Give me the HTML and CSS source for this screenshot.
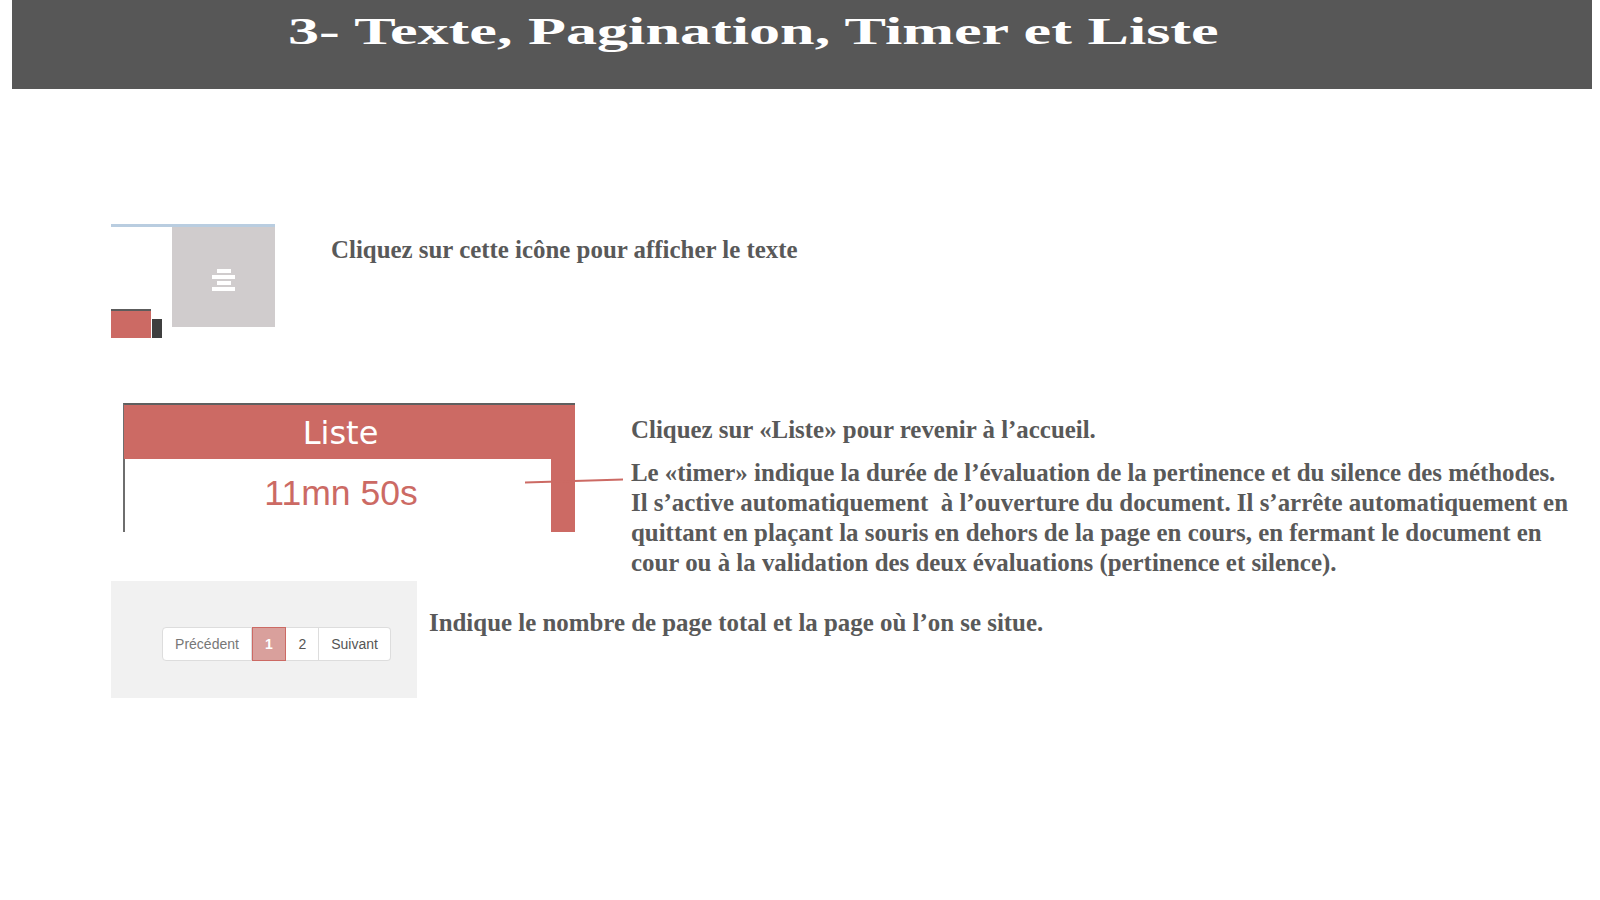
FILE: index.html
```html
<!DOCTYPE html>
<html lang="fr">

<head>
    <meta charset="UTF-8">
    <meta name="viewport" content="width=device-width, initial-scale=1.0">
    <title>3- Texte, Pagination, Timer et Liste</title>
    <link rel="stylesheet" href="styles.css">
</head>

<body>
    <header class="banner">
        <h1 class="banner-title">3- Texte, Pagination, Timer et Liste</h1>
    </header>

    <main class="content">
        <!-- icone texte -->
        <section class="row row-icon">
            <div class="icon-shot">
                <div class="icon-left">
                    <span class="icon-red"></span>
                    <span class="icon-dark"></span>
                </div>
                <div class="icon-grey">
                    <span class="bar bar-short"></span>
                    <span class="bar"></span>
                    <span class="bar bar-short"></span>
                    <span class="bar"></span>
                </div>
            </div>
            <p class="note note-icon">Cliquez sur cette icône pour afficher le texte</p>
        </section>

        <!-- liste et timer -->
        <section class="row row-list">
            <div class="list-shot">
                <div class="list-head">Liste</div>
                <div class="list-body">
                    <div class="list-timer">11mn 50s</div>
                    <div class="list-side"></div>
                </div>
                <svg class="pointer" width="98" height="6" viewBox="0 0 98 6">
                    <line x1="0" y1="4.5" x2="98" y2="1.5" stroke="#cc6a64" stroke-width="2"></line>
                </svg>
            </div>
            <div class="list-notes">
                <p class="note note-list">Cliquez sur «Liste» pour revenir à l’accueil.</p>
                <p class="note note-timer">Le «timer» indique la durée de l’évaluation de la pertinence et du silence des méthodes.<br>
                    Il s’active automatiquement &nbsp;à l’ouverture du document. Il s’arrête automatiquement en<br>
                    quittant en plaçant la souris en dehors de la page en cours, en fermant le document en<br>
                    cour ou à la validation des deux évaluations (pertinence et silence).</p>
            </div>
        </section>

        <!-- pagination -->
        <section class="row row-pages">
            <div class="pages-shot">
                <div class="pagination">
                    <a class="page page-prev">Précédent</a>
                    <a class="page page-num page-active">1</a>
                    <a class="page page-num">2</a>
                    <a class="page page-next">Suivant</a>
                </div>
            </div>
            <p class="note note-pages">Indique le nombre de page total et la page où l’on se situe.</p>
        </section>
    </main>
</body>

</html>
```

FILE: styles.css
```css
* {
    margin: 0;
    padding: 0;
    box-sizing: border-box;
}

body {
    background-color: #fff;
    font-family: "Liberation Serif", serif;
    color: #595959;
}

.banner {
    height: 89px;
    margin: 0 8px 0 12px;
    padding: 9px 0 0 276px;
    background-color: #575757;
}

.banner-title {
    display: inline-block;
    font-size: 37px;
    line-height: 46px;
    font-weight: bold;
    white-space: nowrap;
    color: #fff;
    transform: scaleX(1.68);
    transform-origin: left center;
}

.content {
    padding: 135px 0 0 111px;
}

.row {
    display: flex;
    align-items: flex-start;
}

.note {
    font-size: 24.9px;
    line-height: 30px;
    font-weight: bold;
    white-space: nowrap;
}

/* icone texte */
.row-icon {
    height: 114px;
}

.icon-shot {
    display: flex;
    width: 164px;
    height: 114px;
    border-top: 3px solid #b9cde0;
}

.icon-left {
    display: flex;
    align-items: flex-end;
    width: 61px;
    height: 111px;
}

.icon-red {
    width: 40px;
    height: 29px;
    background-color: #cc6a64;
    border-top: 2px solid #5c5c5c;
}

.icon-dark {
    width: 10px;
    height: 19px;
    margin-left: 1px;
    background-color: #3f3f3f;
}

.icon-grey {
    display: flex;
    flex-direction: column;
    align-items: center;
    justify-content: center;
    gap: 2px;
    width: 103px;
    height: 100px;
    padding-top: 5px;
    background-color: #d0cccd;
}

.bar {
    width: 23px;
    height: 4px;
    background-color: #fff;
}

.bar-short {
    width: 14px;
}

.note-icon {
    margin-left: 56px;
    padding-top: 11px;
}

/* liste et timer */
.row-list {
    height: 178px;
    margin-top: 65px;
    padding-left: 12px;
}

.list-shot {
    position: relative;
    width: 452px;
    height: 129px;
    border-top: 2px solid #5f5f5f;
    border-left: 2px solid #6e6e6e;
}

.list-head {
    height: 54px;
    margin-left: -1px;
    padding: 1px 18px 0 0;
    background-color: #cc6a64;
    font-family: "DejaVu Sans", sans-serif;
    font-size: 32px;
    line-height: 54px;
    text-align: center;
    color: #fff;
}

.list-body {
    display: flex;
    height: 73px;
}

.list-timer {
    flex: 1;
    padding: 13px 0 0 6px;
    font-family: "Liberation Sans", sans-serif;
    font-size: 35.5px;
    line-height: 42px;
    text-align: center;
    color: #cc6a64;
}

.list-side {
    width: 24px;
    background-color: #cc6a64;
}

.pointer {
    position: absolute;
    left: 400px;
    top: 73px;
}

.list-notes {
    margin-left: 56px;
}

.note-list {
    padding-top: 12px;
}

.note-timer {
    margin-top: 13px;
}

/* pagination */
.pages-shot {
    width: 306px;
    height: 117px;
    padding: 46px 0 0 51px;
    background-color: #f1f1f1;
}

.pagination {
    display: flex;
    width: 229px;
    height: 34px;
    font-family: "Liberation Sans", sans-serif;
    font-size: 14px;
    line-height: 32px;
    text-align: center;
    color: #555;
}

.page {
    background-color: #fff;
    border: 1px solid #ddd;
    border-left: 0;
}

.page-prev {
    width: 90px;
    border-left: 1px solid #ddd;
    border-radius: 4px 0 0 4px;
    color: #777;
}

.page-num {
    width: 33px;
    padding-left: 1px;
}

.page-active {
    width: 34px;
    padding-left: 0;
    background-color: #d9a09c;
    border: 1px solid #cc6a64;
    font-weight: bold;
    color: #fff;
}

.page-next {
    width: 72px;
    border-radius: 0 4px 4px 0;
}

.note-pages {
    margin-left: 12px;
    padding-top: 27px;
}
```
